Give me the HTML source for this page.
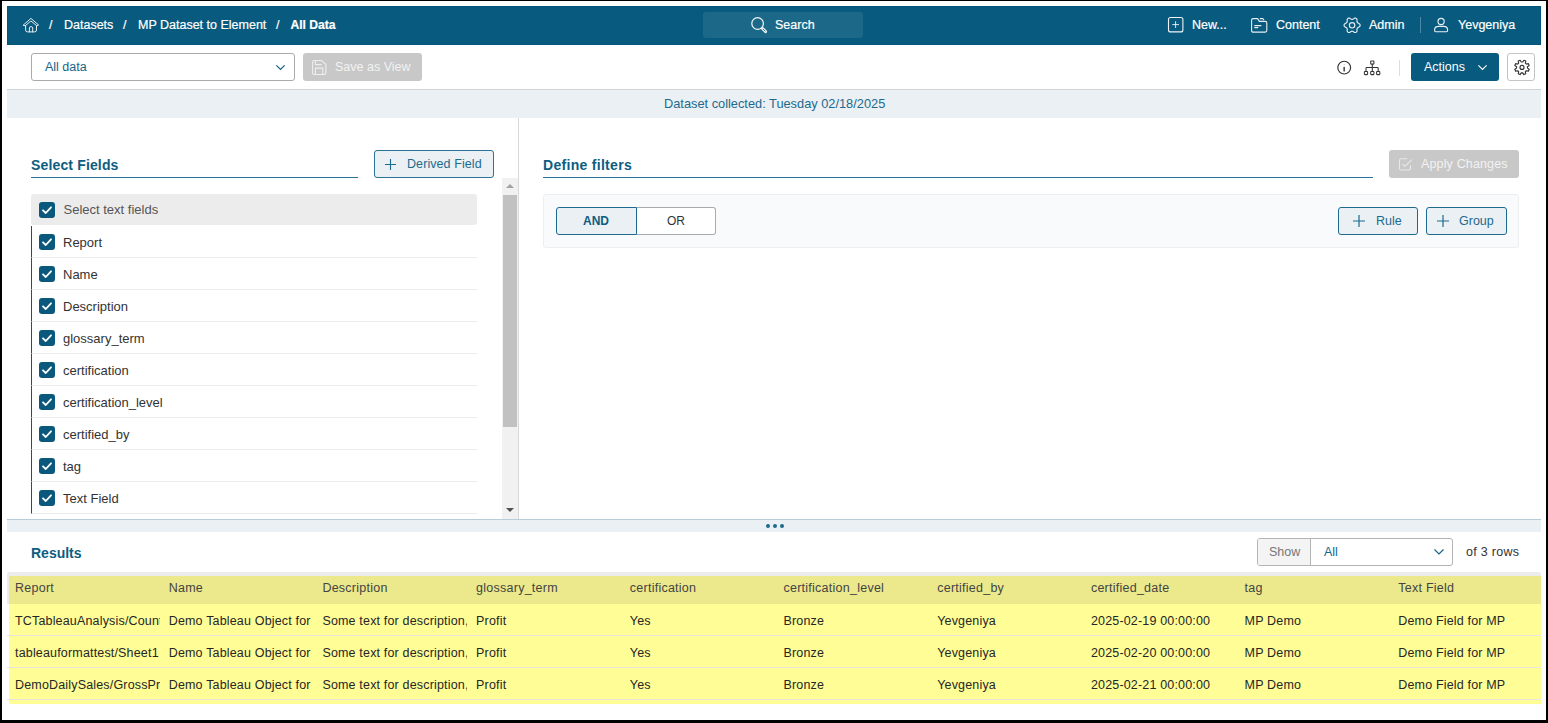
<!DOCTYPE html>
<html><head><meta charset="utf-8">
<style>
*{box-sizing:border-box;margin:0;padding:0}
html,body{width:1548px;height:723px;overflow:hidden;background:#fff;font-family:"Liberation Sans",sans-serif;position:relative}
.a{position:absolute}
.t{position:absolute;white-space:nowrap;line-height:1}
#frameL{left:0;top:0;width:2px;height:723px;background:#000}
#frameT{left:0;top:0;width:1548px;height:1px;background:#000}
#frameR{left:1546px;top:0;width:2px;height:723px;background:#000}
#frameB{left:0;top:720px;width:1548px;height:3px;background:#000}
#hdr{left:7px;top:6px;width:1534px;height:39px;background:#085a7e;box-shadow:inset 0 0 0 1px #03547a}
.hw{color:#fff;font-size:12.5px;-webkit-text-stroke:0.2px #fff}
svg{position:absolute;overflow:visible}
.cb{position:absolute;left:39px;width:16px;height:16px;background:#0a587b;border-radius:3px}
.fr{position:absolute;left:31px;width:446px;height:32px;border-left:1px solid #0a587b;border-bottom:1px solid #ededed}
.fl{position:absolute;left:32px;color:#333;font-size:13px}
.th{position:absolute;top:581px;color:#444;font-size:12.5px;line-height:14px;letter-spacing:0.25px}
.td{position:absolute;color:#262626;font-size:12.5px;line-height:14px;overflow:hidden;white-space:nowrap;letter-spacing:0.17px}
</style></head>
<body>
<div id="frameL" class="a"></div><div id="frameT" class="a"></div><div id="frameR" class="a"></div><div id="frameB" class="a"></div>

<!-- HEADER -->
<div id="hdr" class="a"></div>
<svg style="left:20px;top:14px" width="24" height="22" viewBox="0 0 24 22" fill="none" stroke="#e6eef2" stroke-width="1" stroke-linejoin="round" stroke-linecap="round">
  <path d="M3.4 11 L10.9 4.4 L18.6 11 L16.6 11.6 L10.9 7 L5.4 11.6 Z"/>
  <path d="M5.6 11.8 V16 Q5.6 17.9 7.5 17.9 H14.6 Q16.5 17.9 16.5 16 V11.8"/>
  <path d="M9.4 17.9 V13.9 Q9.4 12.6 11.05 12.6 Q12.7 12.6 12.7 13.9 V17.9"/>
</svg>
<div class="t hw" style="left:49px;top:19px">/</div>
<div class="t hw" style="left:64px;top:19px">Datasets</div>
<div class="t hw" style="left:123px;top:19px">/</div>
<div class="t hw" style="left:138px;top:19px">MP Dataset to Element</div>
<div class="t hw" style="left:276px;top:19px">/</div>
<div class="t hw" style="left:290.5px;top:19px;font-weight:bold;font-size:12.1px">All Data</div>

<div class="a" style="left:703px;top:12px;width:160px;height:26px;background:#1b6888;border-radius:3px"></div>
<svg style="left:746px;top:13px" width="24" height="24" viewBox="0 0 24 24" fill="none" stroke="#eef4f7" stroke-width="1.25">
  <circle cx="11.6" cy="10.5" r="5.8"/>
  <path d="M16.6 15.6 L19.6 18.6" stroke-width="2.9" stroke-linecap="round"/>
  <path d="M17.1 16.1 L19.1 18.1" stroke="#1b6888" stroke-width="0.9" stroke-linecap="round"/>
</svg>
<div class="t hw" style="left:775px;top:19px">Search</div>

<svg style="left:1164px;top:13px" width="24" height="24" viewBox="0 0 24 24" fill="none" stroke="#eef4f7" stroke-width="1.1">
  <rect x="4.5" y="4.5" width="14.4" height="14.4" rx="2"/><path d="M11.6 8.2 V15 M8.2 11.6 H15" stroke-width="0.9"/>
</svg>
<div class="t hw" style="left:1192px;top:19px">New...</div>
<svg style="left:1247px;top:13px" width="24" height="24" viewBox="0 0 24 24" fill="none" stroke="#e6eef2" stroke-width="1.1" stroke-linejoin="round" stroke-linecap="round">
  <path d="M4.6 7.2 Q4.6 5.6 6.2 5.6 H10.6 L12.4 8.4 H18.2 Q19.8 8.4 19.8 10 V17.6 Q19.8 19.1 18.2 19.1 H6.2 Q4.6 19.1 4.6 17.6 Z"/>
  <path d="M13.2 5.6 H15.8 L16.7 6.6"/>
  <path d="M7.7 12.6 H14 M7.7 14.6 H10.8"/>
</svg>
<div class="t hw" style="left:1276px;top:19px">Content</div>
<svg style="left:1340px;top:13px" width="24" height="24" viewBox="0 0 24 24" fill="none" stroke="#e6eef2" stroke-width="1.15" stroke-linejoin="round">
  <path d="M20.15 12.30 L20.06 12.86 L19.79 13.38 L19.35 13.84 L18.66 14.18 L18.11 14.49 L17.69 14.79 L17.37 15.10 L17.16 15.46 L17.05 15.89 L17.00 16.41 L17.01 17.04 L17.06 17.81 L16.88 18.42 L16.56 18.91 L16.12 19.27 L15.60 19.47 L15.01 19.50 L14.39 19.35 L13.75 18.92 L13.21 18.60 L12.74 18.38 L12.31 18.26 L11.89 18.26 L11.46 18.38 L10.99 18.60 L10.45 18.92 L9.81 19.35 L9.19 19.50 L8.60 19.47 L8.08 19.27 L7.64 18.91 L7.32 18.42 L7.14 17.81 L7.19 17.04 L7.20 16.41 L7.15 15.89 L7.04 15.46 L6.83 15.10 L6.51 14.79 L6.09 14.49 L5.54 14.18 L4.85 13.84 L4.41 13.38 L4.14 12.86 L4.05 12.30 L4.14 11.74 L4.41 11.22 L4.85 10.76 L5.54 10.42 L6.09 10.11 L6.51 9.81 L6.83 9.50 L7.04 9.14 L7.15 8.71 L7.20 8.19 L7.19 7.56 L7.14 6.79 L7.32 6.18 L7.64 5.69 L8.07 5.33 L8.60 5.13 L9.19 5.10 L9.81 5.25 L10.45 5.68 L10.99 6.00 L11.46 6.22 L11.89 6.34 L12.31 6.34 L12.74 6.22 L13.21 6.00 L13.75 5.68 L14.39 5.25 L15.01 5.10 L15.60 5.13 L16.12 5.33 L16.56 5.69 L16.88 6.18 L17.06 6.79 L17.01 7.56 L17.00 8.19 L17.05 8.71 L17.16 9.14 L17.37 9.50 L17.69 9.81 L18.11 10.11 L18.66 10.42 L19.35 10.76 L19.79 11.22 L20.06 11.74 Z"/><circle cx="12.1" cy="12.3" r="2.7"/>
</svg>
<div class="t hw" style="left:1369px;top:19px">Admin</div>
<div class="a" style="left:1420px;top:17px;width:1px;height:16px;background:#4d8aa5"></div>
<svg style="left:1429px;top:13px" width="24" height="24" viewBox="0 0 24 24" fill="none" stroke="#e6eef2" stroke-width="1.15" stroke-linejoin="round">
  <circle cx="12.1" cy="8.5" r="3.1"/>
  <path d="M5.6 17.6 V17 Q5.6 13.4 9.6 13.4 H14.6 Q18.6 13.4 18.6 17 V17.6 Q18.6 18.7 17.5 18.7 H6.7 Q5.6 18.7 5.6 17.6 Z"/>
</svg>
<div class="t hw" style="left:1458px;top:19px">Yevgeniya</div>

<!-- TOOLBAR -->
<div class="a" style="left:31px;top:53px;width:264px;height:28px;border:1px solid #aaa;border-radius:3px;background:#fff"></div>
<div class="t" style="left:45px;top:61px;font-size:12.5px;color:#15658a">All data</div>
<svg style="left:276px;top:65px" width="9" height="5" viewBox="0 0 9 5" fill="none" stroke="#15658a" stroke-width="1.3"><path d="M0.4 0.4 L4.5 4.4 L8.6 0.4"/></svg>
<div class="a" style="left:303px;top:53px;width:119px;height:28px;background:#c8c8c8;border-radius:3px"></div>
<svg style="left:303px;top:53px" width="40" height="28" viewBox="0 0 40 28" fill="none" stroke="#efefef" stroke-width="1.05" stroke-linejoin="round">
  <path d="M9.6 8.9 Q9.6 7.4 11.1 7.4 H18.4 L22.9 11.4 V20 Q22.9 21.5 21.4 21.5 H11.1 Q9.6 21.5 9.6 20 Z"/>
  <path d="M12.4 7.4 V11.6 H18.6"/>
  <path d="M12.4 21.5 V15.1 H19.8 V21.5"/>
</svg>
<div class="t" style="left:335px;top:61px;font-size:12.5px;color:#f2f2f2">Save as View</div>

<svg style="left:1332px;top:55px" width="24" height="24" viewBox="0 0 24 24" fill="none" stroke="#333" stroke-width="1.15">
  <circle cx="12.2" cy="12.6" r="6.4"/><path d="M12.15 12.4 V15.9" stroke-width="1.4" stroke-linecap="round"/><circle cx="12.15" cy="9.5" r="0.45" fill="#888" stroke="none"/>
</svg>
<svg style="left:1360px;top:55px" width="24" height="24" viewBox="0 0 24 24" fill="none" stroke="#333" stroke-width="1.05" stroke-linejoin="round">
  <rect x="10.7" y="5.9" width="3.2" height="3.2" rx="0.6"/>
  <rect x="4.4" y="16.4" width="3.2" height="3.2" rx="0.6"/><rect x="10.7" y="16.4" width="3.2" height="3.2" rx="0.6"/><rect x="16.6" y="16.4" width="3.2" height="3.2" rx="0.6"/>
  <path d="M12.3 9.1 V16.4 M6 16.4 V13.2 Q6 12.4 6.8 12.4 H17.4 Q18.2 12.4 18.2 13.2 V16.4"/>
</svg>
<div class="a" style="left:1399px;top:60px;width:1px;height:16px;background:#ddd"></div>
<div class="a" style="left:1411px;top:53px;width:88px;height:28px;background:#085a7e;border-radius:3px"></div>
<div class="t" style="left:1424px;top:61px;font-size:12.5px;color:#fff">Actions</div>
<svg style="left:1478px;top:65px" width="9" height="5" viewBox="0 0 9 5" fill="none" stroke="#fff" stroke-width="1.15"><path d="M0.4 0.4 L4.5 4.5 L8.6 0.4"/></svg>
<div class="a" style="left:1507px;top:53px;width:28px;height:28px;border:1px solid #c4c4c4;border-radius:3px;background:#fff"></div>
<svg style="left:1510px;top:55px" width="24" height="24" viewBox="0 0 24 24" fill="none" stroke="#333" stroke-width="1.15" stroke-linejoin="round">
  <path d="M17.45 13.12 L19.16 14.25 L18.38 16.16 L16.36 15.75 L15.35 16.76 L15.76 18.78 L13.85 19.56 L12.72 17.85 L11.28 17.85 L10.15 19.56 L8.24 18.78 L8.65 16.76 L7.64 15.75 L5.62 16.16 L4.84 14.25 L6.55 13.12 L6.55 11.68 L4.84 10.55 L5.62 8.64 L7.64 9.05 L8.65 8.04 L8.24 6.02 L10.15 5.24 L11.28 6.95 L12.72 6.95 L13.85 5.24 L15.76 6.02 L15.35 8.04 L16.36 9.05 L18.38 8.64 L19.16 10.55 L17.45 11.68 Z"/><circle cx="12" cy="12.4" r="2.0"/>
</svg>

<!-- BAND -->
<div class="a" style="left:7px;top:89px;width:1534px;height:1px;background:#cfd3d6"></div>
<div class="a" style="left:7px;top:90px;width:1534px;height:28px;background:#ebf0f4"></div>
<div class="t" style="left:664px;top:98px;font-size:12.8px;color:#1c6a8e">Dataset collected: Tuesday 02/18/2025</div>

<!-- LEFT PANEL -->
<div class="a" style="left:518px;top:118px;width:1px;height:401px;background:#d8d8d8"></div>
<div class="t" style="left:31px;top:158px;font-size:14px;font-weight:bold;color:#0d5d81;letter-spacing:0.15px">Select Fields</div>
<div class="a" style="left:31px;top:177px;width:327px;height:1px;background:#2a7297"></div>
<div class="a" style="left:374px;top:150px;width:120px;height:28px;border:1px solid #2a7297;border-radius:3px;background:#ebf0f4"></div>
<svg style="left:385px;top:158.5px" width="11" height="11" viewBox="0 0 11 11" stroke="#1c6a8e" stroke-width="1.1"><path d="M5.5 0 V11 M0 5.5 H11"/></svg>
<div class="t" style="left:407px;top:158px;font-size:12.5px;color:#1c6a8e;letter-spacing:0.08px">Derived Field</div>

<div class="a" style="left:31px;top:194px;width:446px;height:31px;background:#ececec;border-radius:3px"></div>
<div class="cb" style="top:202px"></div>
<div class="t" style="left:63.5px;top:203px;font-size:13px;color:#555">Select text fields</div>

<div class="fr" style="top:226px"></div><div class="cb" style="top:234px"></div><div class="t fl" style="left:63px;top:236px">Report</div><div class="fr" style="top:258px"></div><div class="cb" style="top:266px"></div><div class="t fl" style="left:63px;top:268px">Name</div><div class="fr" style="top:290px"></div><div class="cb" style="top:298px"></div><div class="t fl" style="left:63px;top:300px">Description</div><div class="fr" style="top:322px"></div><div class="cb" style="top:330px"></div><div class="t fl" style="left:63px;top:332px">glossary_term</div><div class="fr" style="top:354px"></div><div class="cb" style="top:362px"></div><div class="t fl" style="left:63px;top:364px">certification</div><div class="fr" style="top:386px"></div><div class="cb" style="top:394px"></div><div class="t fl" style="left:63px;top:396px">certification_level</div><div class="fr" style="top:418px"></div><div class="cb" style="top:426px"></div><div class="t fl" style="left:63px;top:428px">certified_by</div><div class="fr" style="top:450px"></div><div class="cb" style="top:458px"></div><div class="t fl" style="left:63px;top:460px">tag</div><div class="fr" style="top:482px"></div><div class="cb" style="top:490px"></div><div class="t fl" style="left:63px;top:492px">Text Field</div><svg style="left:39px;top:202px" width="16" height="16" viewBox="0 0 16 16" fill="none" stroke="#fff" stroke-width="1.8" stroke-linecap="round" stroke-linejoin="round"><path d="M4 8.3 L6.8 11 L12 5.3"/></svg><svg style="left:39px;top:234px" width="16" height="16" viewBox="0 0 16 16" fill="none" stroke="#fff" stroke-width="1.8" stroke-linecap="round" stroke-linejoin="round"><path d="M4 8.3 L6.8 11 L12 5.3"/></svg><svg style="left:39px;top:266px" width="16" height="16" viewBox="0 0 16 16" fill="none" stroke="#fff" stroke-width="1.8" stroke-linecap="round" stroke-linejoin="round"><path d="M4 8.3 L6.8 11 L12 5.3"/></svg><svg style="left:39px;top:298px" width="16" height="16" viewBox="0 0 16 16" fill="none" stroke="#fff" stroke-width="1.8" stroke-linecap="round" stroke-linejoin="round"><path d="M4 8.3 L6.8 11 L12 5.3"/></svg><svg style="left:39px;top:330px" width="16" height="16" viewBox="0 0 16 16" fill="none" stroke="#fff" stroke-width="1.8" stroke-linecap="round" stroke-linejoin="round"><path d="M4 8.3 L6.8 11 L12 5.3"/></svg><svg style="left:39px;top:362px" width="16" height="16" viewBox="0 0 16 16" fill="none" stroke="#fff" stroke-width="1.8" stroke-linecap="round" stroke-linejoin="round"><path d="M4 8.3 L6.8 11 L12 5.3"/></svg><svg style="left:39px;top:394px" width="16" height="16" viewBox="0 0 16 16" fill="none" stroke="#fff" stroke-width="1.8" stroke-linecap="round" stroke-linejoin="round"><path d="M4 8.3 L6.8 11 L12 5.3"/></svg><svg style="left:39px;top:426px" width="16" height="16" viewBox="0 0 16 16" fill="none" stroke="#fff" stroke-width="1.8" stroke-linecap="round" stroke-linejoin="round"><path d="M4 8.3 L6.8 11 L12 5.3"/></svg><svg style="left:39px;top:458px" width="16" height="16" viewBox="0 0 16 16" fill="none" stroke="#fff" stroke-width="1.8" stroke-linecap="round" stroke-linejoin="round"><path d="M4 8.3 L6.8 11 L12 5.3"/></svg><svg style="left:39px;top:490px" width="16" height="16" viewBox="0 0 16 16" fill="none" stroke="#fff" stroke-width="1.8" stroke-linecap="round" stroke-linejoin="round"><path d="M4 8.3 L6.8 11 L12 5.3"/></svg>

<!-- scrollbar -->
<div class="a" style="left:502px;top:178px;width:16px;height:341px;background:#f1f1f1"></div>
<div class="a" style="left:503px;top:195px;width:14px;height:232px;background:#c1c1c1"></div>
<svg style="left:506px;top:184px" width="8" height="4" viewBox="0 0 8 4"><path d="M0 4 L4 0 L8 4 Z" fill="#a3a3a3"/></svg>
<svg style="left:506px;top:508px" width="8" height="4" viewBox="0 0 8 4"><path d="M0 0 L4 4 L8 0 Z" fill="#505050"/></svg>

<!-- RIGHT PANEL -->
<div class="t" style="left:543px;top:158px;font-size:14px;font-weight:bold;color:#0d5d81;letter-spacing:0.3px">Define filters</div>
<div class="a" style="left:543px;top:177px;width:830px;height:1px;background:#2a7297"></div>
<div class="a" style="left:1389px;top:150px;width:130px;height:28px;background:#c8c8c8;border-radius:3px"></div>
<svg style="left:1389px;top:150px" width="40" height="28" viewBox="0 0 40 28" fill="none" stroke="#e8e8e8" stroke-width="1.1" stroke-linejoin="round" stroke-linecap="round">
  <path d="M17.8 8.7 H12 Q10.5 8.7 10.5 10.2 V18.5 Q10.5 20 12 20 H20 Q21.5 20 21.5 18.5 V15.5"/>
  <path d="M14 14.5 L15.9 16.4 L22.6 9.9"/>
</svg>
<div class="t" style="left:1421px;top:158px;font-size:12.5px;color:#f2f2f2;letter-spacing:0.15px">Apply Changes</div>

<div class="a" style="left:543px;top:194px;width:976px;height:54px;background:#f9fafb;border:1px solid #eceef0;border-radius:3px"></div>
<div class="a" style="left:556px;top:207px;width:81px;height:28px;background:#ebf0f4;border:1px solid #1c6a8e;border-radius:3px 0 0 3px"></div>
<div class="a" style="left:637px;top:207px;width:79px;height:28px;background:#fff;border:1px solid #aaa;border-left:none;border-radius:0 3px 3px 0"></div>
<div class="t" style="left:583px;top:215px;font-size:12px;font-weight:bold;color:#0d5d81">AND</div>
<div class="t" style="left:667px;top:215px;font-size:12px;color:#333">OR</div>

<div class="a" style="left:1338px;top:207px;width:80px;height:28px;border:1px solid #1c6a8e;border-radius:3px;background:#ebf0f4"></div>
<svg style="left:1353px;top:215px" width="12" height="12" viewBox="0 0 12 12" stroke="#1c6a8e" stroke-width="1.2"><path d="M6 0 V12 M0 6 H12"/></svg>
<div class="t" style="left:1376px;top:215px;font-size:12.5px;color:#1c6a8e">Rule</div>
<div class="a" style="left:1426px;top:207px;width:81px;height:28px;border:1px solid #1c6a8e;border-radius:3px;background:#ebf0f4"></div>
<svg style="left:1437px;top:215px" width="12" height="12" viewBox="0 0 12 12" stroke="#1c6a8e" stroke-width="1.2"><path d="M6 0 V12 M0 6 H12"/></svg>
<div class="t" style="left:1459px;top:215px;font-size:12.5px;color:#1c6a8e">Group</div>

<!-- SPLITTER -->
<div class="a" style="left:7px;top:519px;width:1534px;height:1px;background:#b9cdd8"></div>
<div class="a" style="left:7px;top:520px;width:1534px;height:12px;background:#ebf0f4"></div>
<div class="a" style="left:766px;top:524px;width:4px;height:4px;border-radius:2px;background:#1c6a8e"></div>
<div class="a" style="left:773px;top:524px;width:4px;height:4px;border-radius:2px;background:#1c6a8e"></div>
<div class="a" style="left:780px;top:524px;width:4px;height:4px;border-radius:2px;background:#1c6a8e"></div>

<!-- RESULTS -->
<div class="t" style="left:31px;top:546px;font-size:14px;font-weight:bold;color:#0d5d81">Results</div>
<div class="a" style="left:1257px;top:538px;width:196px;height:28px;border:1px solid #b4b4b4;border-radius:3px;background:#fff"></div>
<div class="a" style="left:1258px;top:539px;width:53px;height:26px;background:#f4f4f4;border-right:1px solid #b4b4b4;border-radius:2px 0 0 2px"></div>
<div class="t" style="left:1269px;top:546px;font-size:12.5px;color:#777">Show</div>
<div class="t" style="left:1324px;top:546px;font-size:12.5px;color:#15658a">All</div>
<svg style="left:1434px;top:549px" width="10" height="6" viewBox="0 0 10 6" fill="none" stroke="#15658a" stroke-width="1.2"><path d="M0.5 0.5 L5 5 L9.5 0.5"/></svg>
<div class="t" style="left:1466px;top:546px;font-size:12.5px;color:#333;letter-spacing:0.3px">of 3 rows</div>

<div class="a" style="left:7px;top:572px;width:1534px;height:32px;background:#ececec;border-radius:3px 3px 0 0"></div>
<div class="a" style="left:9px;top:576px;width:1532px;height:128px;background:#fefd96"></div>
<div class="a" style="left:9px;top:576px;width:1532px;height:28px;background:#ebe98b"></div>
<div class="a" style="left:7px;top:635px;width:1534px;height:1px;background:#e6e8dc"></div>
<div class="a" style="left:7px;top:667px;width:1534px;height:1px;background:#e6e8dc"></div>
<div class="a" style="left:7px;top:699px;width:1534px;height:1px;background:#e6e8dc"></div>
<div class="th" style="left:15.0px">Report</div><div class="th" style="left:168.7px">Name</div><div class="th" style="left:322.4px">Description</div><div class="th" style="left:476.1px">glossary_term</div><div class="th" style="left:629.8px">certification</div><div class="th" style="left:783.5px">certification_level</div><div class="th" style="left:937.2px">certified_by</div><div class="th" style="left:1090.9px">certified_date</div><div class="th" style="left:1244.6px">tag</div><div class="th" style="left:1398.3px">Text Field</div><div class="td" style="left:15.0px;top:614px;width:144.7px">TCTableauAnalysis/CountryWise</div><div class="td" style="left:168.7px;top:614px;width:144.7px">Demo Tableau Object for MP</div><div class="td" style="left:322.4px;top:614px;width:144.7px">Some text for description, more</div><div class="td" style="left:476.1px;top:614px;width:144.7px">Profit</div><div class="td" style="left:629.8px;top:614px;width:144.7px">Yes</div><div class="td" style="left:783.5px;top:614px;width:144.7px">Bronze</div><div class="td" style="left:937.2px;top:614px;width:144.7px">Yevgeniya</div><div class="td" style="left:1090.9px;top:614px;width:144.7px">2025-02-19 00:00:00</div><div class="td" style="left:1244.6px;top:614px;width:144.7px">MP Demo</div><div class="td" style="left:1398.3px;top:614px;width:144.7px">Demo Field for MP</div><div class="td" style="left:15.0px;top:646px;width:144.7px">tableauformattest/Sheet1</div><div class="td" style="left:168.7px;top:646px;width:144.7px">Demo Tableau Object for MP</div><div class="td" style="left:322.4px;top:646px;width:144.7px">Some text for description, more</div><div class="td" style="left:476.1px;top:646px;width:144.7px">Profit</div><div class="td" style="left:629.8px;top:646px;width:144.7px">Yes</div><div class="td" style="left:783.5px;top:646px;width:144.7px">Bronze</div><div class="td" style="left:937.2px;top:646px;width:144.7px">Yevgeniya</div><div class="td" style="left:1090.9px;top:646px;width:144.7px">2025-02-20 00:00:00</div><div class="td" style="left:1244.6px;top:646px;width:144.7px">MP Demo</div><div class="td" style="left:1398.3px;top:646px;width:144.7px">Demo Field for MP</div><div class="td" style="left:15.0px;top:678px;width:144.7px">DemoDailySales/GrossProfit</div><div class="td" style="left:168.7px;top:678px;width:144.7px">Demo Tableau Object for MP</div><div class="td" style="left:322.4px;top:678px;width:144.7px">Some text for description, more</div><div class="td" style="left:476.1px;top:678px;width:144.7px">Profit</div><div class="td" style="left:629.8px;top:678px;width:144.7px">Yes</div><div class="td" style="left:783.5px;top:678px;width:144.7px">Bronze</div><div class="td" style="left:937.2px;top:678px;width:144.7px">Yevgeniya</div><div class="td" style="left:1090.9px;top:678px;width:144.7px">2025-02-21 00:00:00</div><div class="td" style="left:1244.6px;top:678px;width:144.7px">MP Demo</div><div class="td" style="left:1398.3px;top:678px;width:144.7px">Demo Field for MP</div>
</body></html>
